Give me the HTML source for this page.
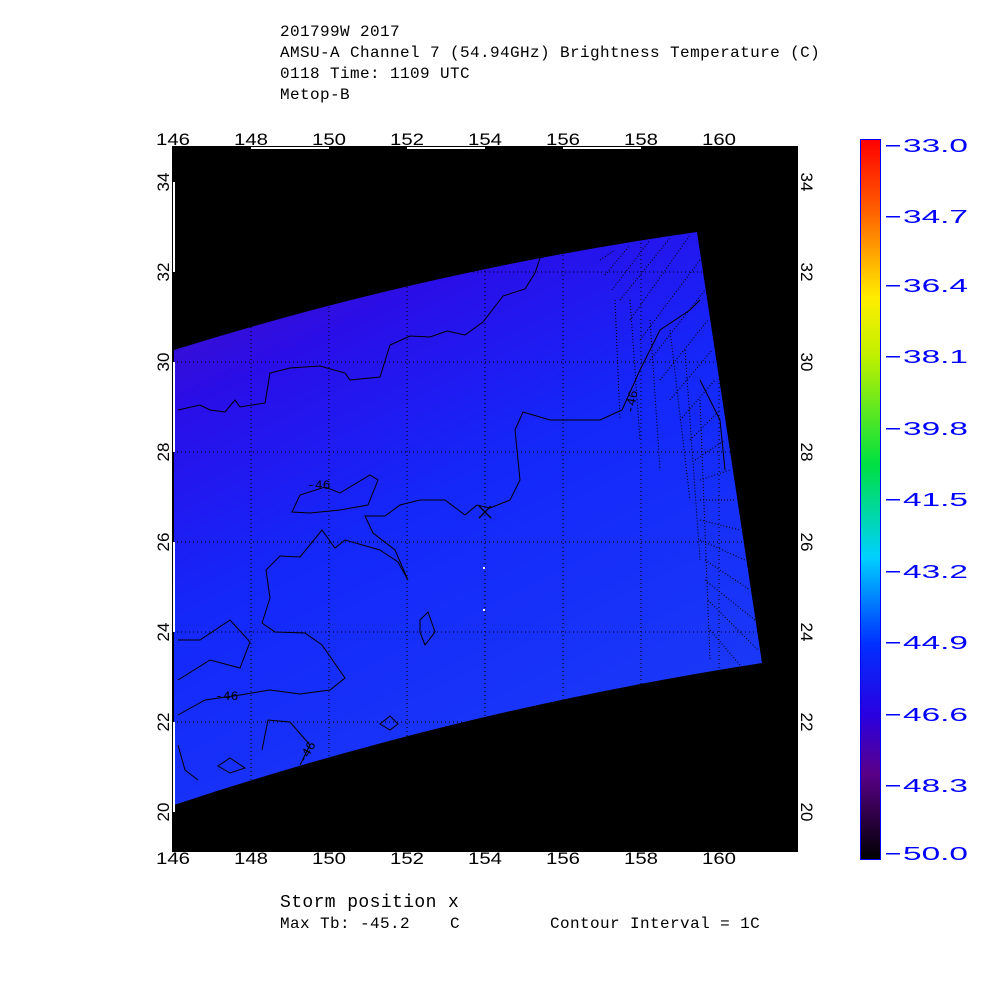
<!DOCTYPE html>
<html><head><style>
body{margin:0;background:#fff;width:1000px;height:1000px;overflow:hidden;font-family:"Liberation Mono",monospace;}
.t{position:absolute;font-size:16px;color:#000;white-space:pre;letter-spacing:0.4px}
</style></head><body>
<div class="t" style="left:280px;top:23px">201799W 2017</div>
<div class="t" style="left:280px;top:44px">AMSU-A Channel 7 (54.94GHz) Brightness Temperature (C)</div>
<div class="t" style="left:280px;top:65px">0118 Time: 1109 UTC</div>
<div class="t" style="left:280px;top:86px">Metop-B</div>
<svg width="1000" height="1000" style="position:absolute;left:0;top:0">
<defs>
<linearGradient id="g" x1="0" y1="0" x2="0.5" y2="1">
<stop offset="0" stop-color="#4a10b8"/><stop offset="0.25" stop-color="#2a0ee8"/><stop offset="0.55" stop-color="#1428fa"/><stop offset="1" stop-color="#1a38f8"/>
</linearGradient>
<linearGradient id="cb" x1="0" y1="1" x2="0" y2="0">
<stop offset="0" stop-color="#000"/><stop offset="0.12" stop-color="#5a008a"/><stop offset="0.2" stop-color="#2a00e0"/><stop offset="0.3" stop-color="#0030ff"/><stop offset="0.42" stop-color="#00d0ff"/><stop offset="0.55" stop-color="#00e040"/><stop offset="0.7" stop-color="#c0f000"/><stop offset="0.78" stop-color="#ffee00"/><stop offset="0.9" stop-color="#ff6000"/><stop offset="1" stop-color="#ff0000"/>
</linearGradient>
</defs>
<rect x="173" y="147" width="624" height="704" fill="#000"/>
<path d="M174,350 Q430,270 697,232 L762,663 Q460,710 174,805 Z" fill="url(#g)"/>
<g stroke="#000" stroke-width="1" stroke-dasharray="1,3">
<line x1="251" y1="147" x2="251" y2="851"/><line x1="329" y1="147" x2="329" y2="851"/><line x1="407" y1="147" x2="407" y2="851"/><line x1="485" y1="147" x2="485" y2="851"/><line x1="563" y1="147" x2="563" y2="851"/><line x1="641" y1="147" x2="641" y2="851"/><line x1="719" y1="147" x2="719" y2="851"/>
<line x1="173" y1="272" x2="797" y2="272"/><line x1="173" y1="362" x2="797" y2="362"/><line x1="173" y1="452" x2="797" y2="452"/><line x1="173" y1="542" x2="797" y2="542"/><line x1="173" y1="632" x2="797" y2="632"/><line x1="173" y1="722" x2="797" y2="722"/>
</g>
<g fill="none" stroke="#000" stroke-width="1">
<path d="M540,258 L535,273 L525,289 L503,296 L483,322 L465,335 L447,331 L430,337 L410,336 L390,345 L380,377 L350,380 L345,373 L320,366 L290,368 L270,373 L265,403 L240,407 L235,400 L225,412 L210,410 L200,405 L178,410"/>
<path d="M178,715 L205,700 L240,695 L270,690 L300,694 L330,690 L345,678 L322,645 L305,633 L275,632 L262,623 L270,598 L266,570 L280,556 L300,557 L322,530 L335,548 L345,540 L380,550 L398,562 L408,580 L395,550 L373,533 L365,516 L385,516 L400,505 L420,500 L445,500 L465,515 L477,505 L490,508 L510,500 L520,480 L515,430 L523,412 L550,420 L600,420 L622,410"/>
<path d="M292,512 L300,495 L325,487 L340,493 L370,475 L378,480 L368,505 L340,510 L310,513 Z"/>
<path d="M178,640 L200,640 L230,620 L250,642 L240,668 L210,660 L178,680"/>
<path d="M420,620 L428,612 L435,632 L425,645 L420,632 Z"/>
<path d="M380,724 L390,716 L398,724 L390,730 Z"/>
<path d="M218,766 L230,758 L245,768 L230,773 Z"/>
<path d="M262,750 L268,720 L290,722 L310,745 L300,765"/>
<path d="M178,745 L185,770 L198,780"/>
<path d="M622,410 L640,370 L660,330 L690,310 L700,300"/>
<path d="M700,380 L720,420 L725,470"/>
</g>
<g fill="none" stroke="#000" stroke-width="1" stroke-dasharray="1,2">
<path d="M600,260 L615,250 M605,275 L630,245 M612,290 L650,240 M620,300 L670,238 M630,320 L690,235 M640,340 L700,260 M650,360 L705,290 M660,380 L708,320 M670,400 L712,350 M680,420 L715,380 M690,440 L720,410 M695,460 L725,440 M700,480 L730,470 M700,500 L735,500 M700,520 L740,530 M700,540 L745,560 M705,560 L750,590 M705,580 L755,620 M708,600 L758,650 M710,630 L740,665"/>
<path d="M615,300 L620,420 M630,300 L640,440 M650,320 L660,470 M670,330 L690,500 M685,350 L700,560 M700,400 L710,660"/>
</g>
<path d="M479,506 L491,518 M491,506 L479,518" stroke="#000" stroke-width="1.3"/>
<rect x="483" y="567" width="2" height="2" fill="#fff"/><rect x="483" y="609" width="2" height="2" fill="#fff"/>
<text x="307" y="489" font-size="13" font-family="Liberation Mono" fill="#000">-46</text>
<text x="215" y="700" font-size="13" font-family="Liberation Mono" fill="#000">-46</text>
<text x="297" y="762" font-size="13" font-family="Liberation Mono" fill="#000" transform="rotate(-60 303 757)">-46</text>
<text x="620" y="412" font-size="13" font-family="Liberation Mono" fill="#000" transform="rotate(-80 628 405)">-46</text>
<rect x="172.5" y="146.5" width="625" height="705" fill="none" stroke="#000"/>
<g stroke="#fff" stroke-width="2"><line x1="251" y1="148" x2="329" y2="148"/><line x1="407" y1="148" x2="485" y2="148"/><line x1="563" y1="148" x2="641" y2="148"/><line x1="174" y1="182" x2="174" y2="272"/><line x1="174" y1="362" x2="174" y2="452"/><line x1="174" y1="542" x2="174" y2="632"/><line x1="174" y1="722" x2="174" y2="812"/></g>
<g font-family="Liberation Sans" font-size="17" fill="#000" text-anchor="middle" lengthAdjust="spacingAndGlyphs">
<text x="173" y="145" textLength="34" lengthAdjust="spacingAndGlyphs">146</text><text x="251" y="145" textLength="34" lengthAdjust="spacingAndGlyphs">148</text><text x="329" y="145" textLength="34" lengthAdjust="spacingAndGlyphs">150</text><text x="407" y="145" textLength="34" lengthAdjust="spacingAndGlyphs">152</text><text x="485" y="145" textLength="34" lengthAdjust="spacingAndGlyphs">154</text><text x="563" y="145" textLength="34" lengthAdjust="spacingAndGlyphs">156</text><text x="641" y="145" textLength="34" lengthAdjust="spacingAndGlyphs">158</text><text x="719" y="145" textLength="34" lengthAdjust="spacingAndGlyphs">160</text>
<text x="173" y="864" textLength="34" lengthAdjust="spacingAndGlyphs">146</text><text x="251" y="864" textLength="34" lengthAdjust="spacingAndGlyphs">148</text><text x="329" y="864" textLength="34" lengthAdjust="spacingAndGlyphs">150</text><text x="407" y="864" textLength="34" lengthAdjust="spacingAndGlyphs">152</text><text x="485" y="864" textLength="34" lengthAdjust="spacingAndGlyphs">154</text><text x="563" y="864" textLength="34" lengthAdjust="spacingAndGlyphs">156</text><text x="641" y="864" textLength="34" lengthAdjust="spacingAndGlyphs">158</text><text x="719" y="864" textLength="34" lengthAdjust="spacingAndGlyphs">160</text>
<text transform="translate(169,182) rotate(-90)">34</text><text transform="translate(169,272) rotate(-90)">32</text><text transform="translate(169,362) rotate(-90)">30</text><text transform="translate(169,452) rotate(-90)">28</text><text transform="translate(169,542) rotate(-90)">26</text><text transform="translate(169,632) rotate(-90)">24</text><text transform="translate(169,722) rotate(-90)">22</text><text transform="translate(169,812) rotate(-90)">20</text>
<text transform="translate(801,182) rotate(90)">34</text><text transform="translate(801,272) rotate(90)">32</text><text transform="translate(801,362) rotate(90)">30</text><text transform="translate(801,452) rotate(90)">28</text><text transform="translate(801,542) rotate(90)">26</text><text transform="translate(801,632) rotate(90)">24</text><text transform="translate(801,722) rotate(90)">22</text><text transform="translate(801,812) rotate(90)">20</text>
</g>
<rect x="860.5" y="139.5" width="20" height="720" fill="url(#cb)" stroke="#00f"/>
<g fill="#00f"><rect x="886" y="145" width="14" height="1.5"/><rect x="886" y="216" width="14" height="1.5"/><rect x="886" y="285" width="14" height="1.5"/><rect x="886" y="356" width="14" height="1.5"/><rect x="886" y="428" width="14" height="1.5"/><rect x="886" y="499" width="14" height="1.5"/><rect x="886" y="571" width="14" height="1.5"/><rect x="886" y="642" width="14" height="1.5"/><rect x="886" y="714" width="14" height="1.5"/><rect x="886" y="785" width="14" height="1.5"/><rect x="886" y="853" width="14" height="1.5"/></g>
<g font-family="Liberation Sans" font-size="18" fill="#00f">
<text x="903" y="152" textLength="65" lengthAdjust="spacingAndGlyphs">33.0</text><text x="903" y="223" textLength="65" lengthAdjust="spacingAndGlyphs">34.7</text><text x="903" y="292" textLength="65" lengthAdjust="spacingAndGlyphs">36.4</text><text x="903" y="363" textLength="65" lengthAdjust="spacingAndGlyphs">38.1</text><text x="903" y="435" textLength="65" lengthAdjust="spacingAndGlyphs">39.8</text><text x="903" y="506" textLength="65" lengthAdjust="spacingAndGlyphs">41.5</text><text x="903" y="578" textLength="65" lengthAdjust="spacingAndGlyphs">43.2</text><text x="903" y="649" textLength="65" lengthAdjust="spacingAndGlyphs">44.9</text><text x="903" y="721" textLength="65" lengthAdjust="spacingAndGlyphs">46.6</text><text x="903" y="792" textLength="65" lengthAdjust="spacingAndGlyphs">48.3</text><text x="903" y="860" textLength="65" lengthAdjust="spacingAndGlyphs">50.0</text>
</g>
</svg>
<div class="t" style="left:280px;top:893px;font-size:18px">Storm position x</div>
<div class="t" style="left:280px;top:915px">Max Tb: -45.2    C         Contour Interval = 1C</div>
</body></html>
